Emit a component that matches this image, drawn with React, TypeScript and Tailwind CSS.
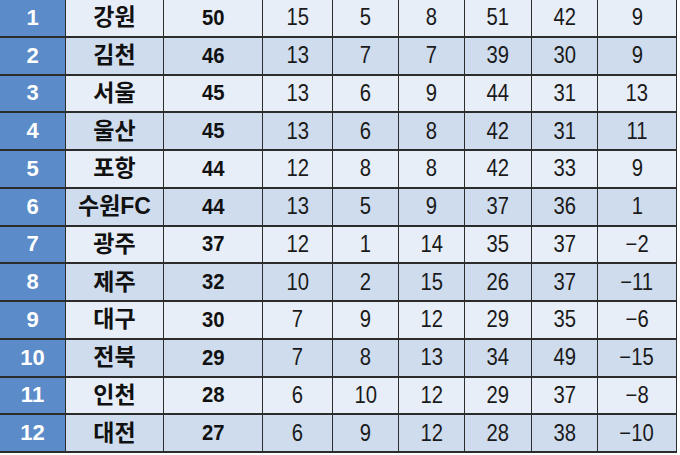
import React from "react";

const rows: [number, string, number, number, number, number, number, number, string][] = [
  [1, "강원", 50, 15, 5, 8, 51, 42, "9"],
  [2, "김천", 46, 13, 7, 7, 39, 30, "9"],
  [3, "서울", 45, 13, 6, 9, 44, 31, "13"],
  [4, "울산", 45, 13, 6, 8, 42, 31, "11"],
  [5, "포항", 44, 12, 8, 8, 42, 33, "9"],
  [6, "수원FC", 44, 13, 5, 9, 37, 36, "1"],
  [7, "광주", 37, 12, 1, 14, 35, 37, "−2"],
  [8, "제주", 32, 10, 2, 15, 26, 37, "−11"],
  [9, "대구", 30, 7, 9, 12, 29, 35, "−6"],
  [10, "전북", 29, 7, 8, 13, 34, 49, "−15"],
  [11, "인천", 28, 6, 10, 12, 29, 37, "−8"],
  [12, "대전", 27, 6, 9, 12, 28, 38, "−10"],
];

export default function App() {
  return (
    <div className="w-[680px] h-[455px] bg-white overflow-hidden">
      <div
        className="grid w-[677px] h-[453px] grid-cols-[66px_98px_99px_70px_66px_66px_67px_66px_79px] grid-rows-12 text-[22px] leading-none text-[#111]"
        style={{ fontFamily: '"Liberation Sans", "Noto Sans CJK KR", sans-serif' }}
      >
        {rows.map((r, i) => {
          const bg = i % 2 === 0 ? "bg-[#e7eef8]" : "bg-[#cfdcee]";
          const cell = `flex items-center justify-center border-r border-b-2 border-[#2c2c2c] ${bg}`;
          return (
            <React.Fragment key={i}>
              <div className="flex items-center justify-center border-r border-b-2 border-[#2c2c2c] bg-[#5b8bc8] text-white font-bold">
                {r[0]}
              </div>
              <div className={`${cell} font-bold text-[23px]`}>{r[1]}</div>
              <div className={`${cell} font-bold`}>
                <span className="inline-block scale-x-[0.92]">{r[2]}</span>
              </div>
              {[r[3], r[4], r[5], r[6], r[7], r[8]].map((v, j) => (
                <div key={j} className={`${cell} text-[23px] text-[#1a1a1a]`}>
                  <span className="inline-block scale-x-[0.88]">{v}</span>
                </div>
              ))}
            </React.Fragment>
          );
        })}
      </div>
    </div>
  );
}
